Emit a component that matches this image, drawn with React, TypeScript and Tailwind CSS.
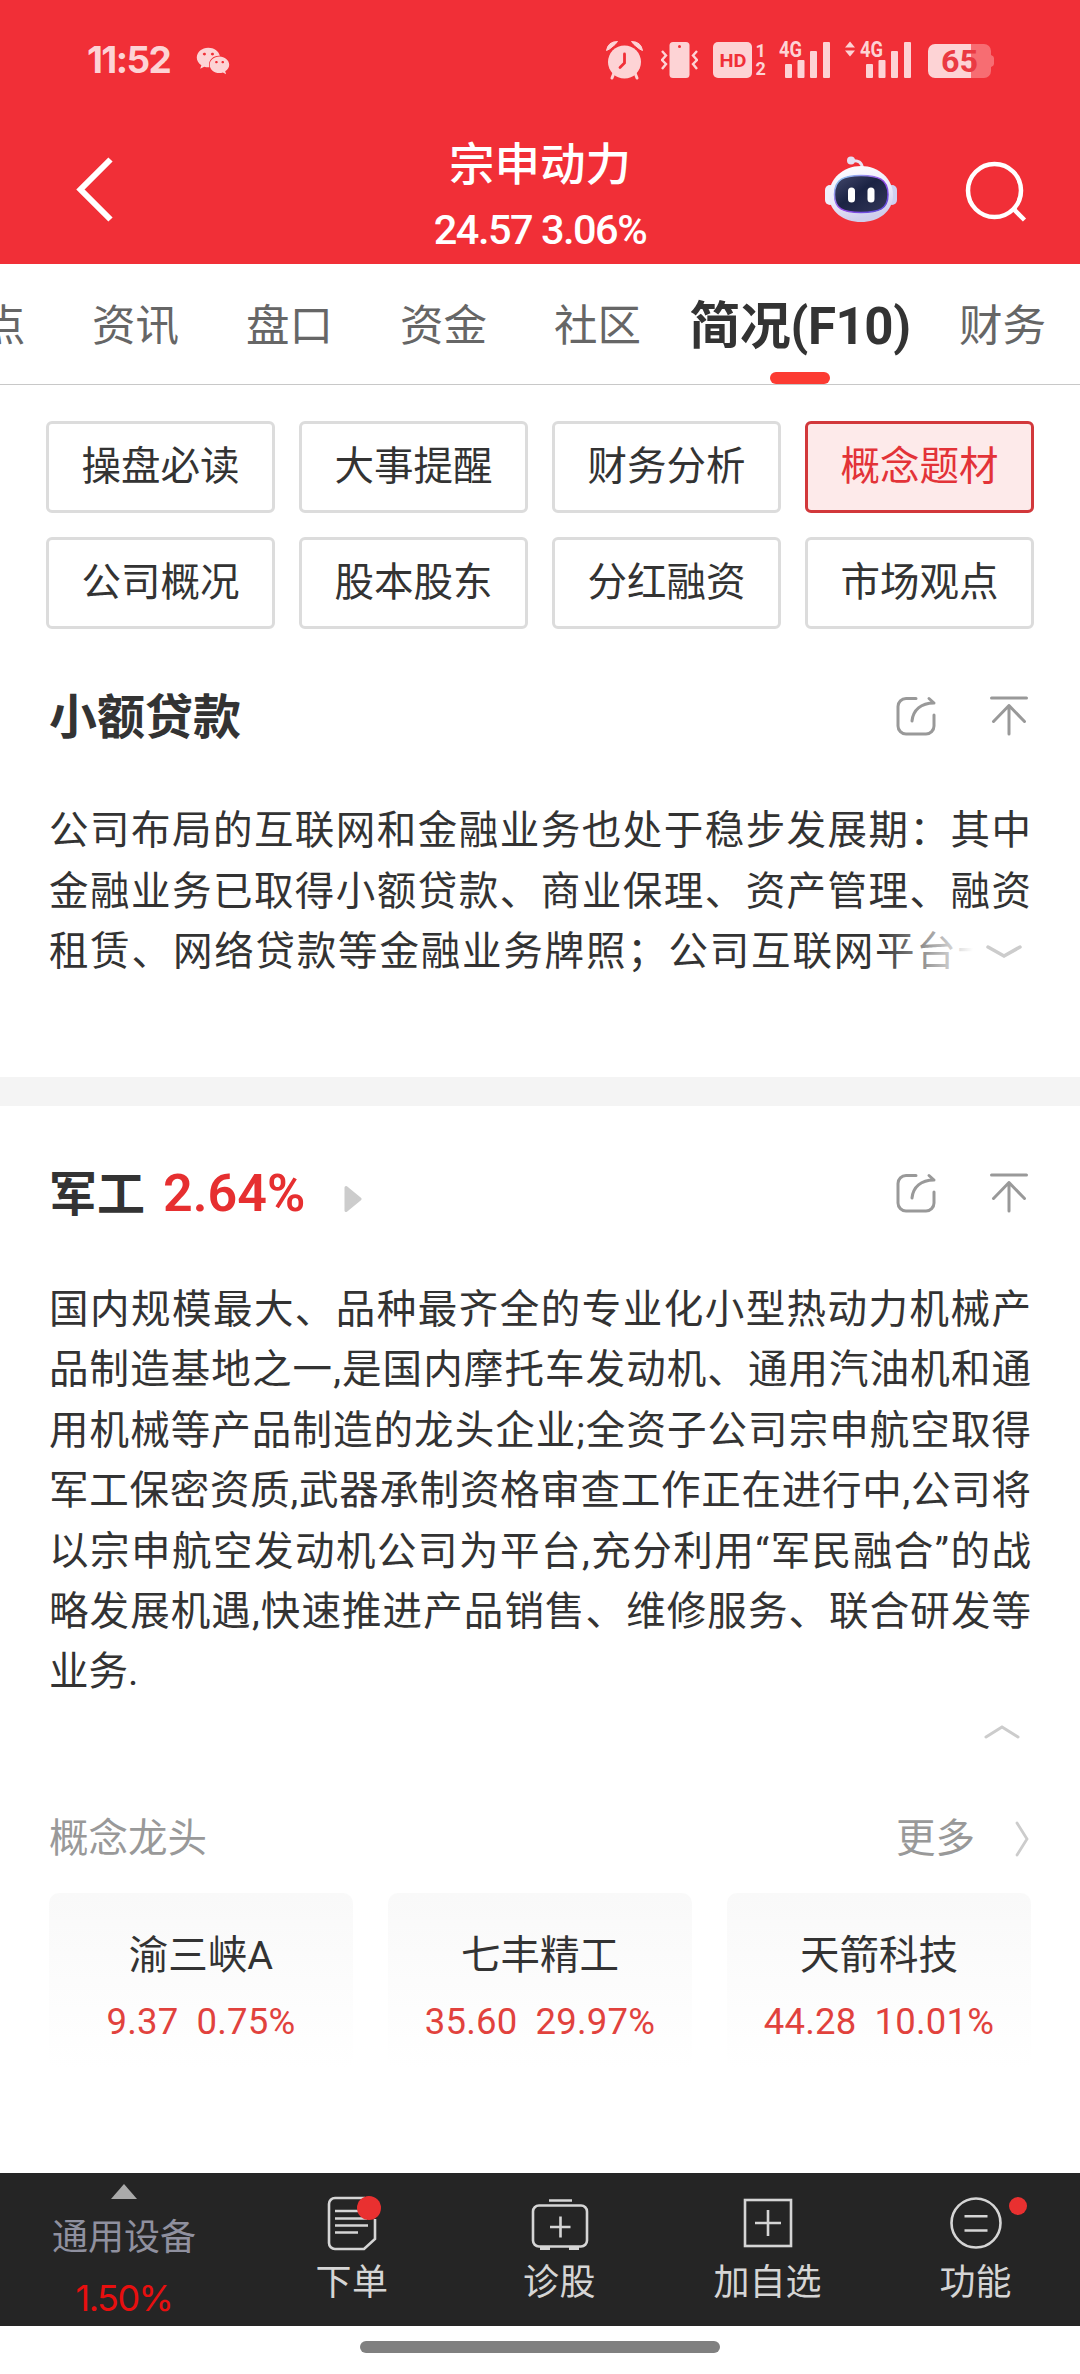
import React from 'react';
import { FaWeixin } from 'react-icons/fa';

const TABS = ['资讯', '盘口', '资金', '社区'];

const MENU = [
  '操盘必读', '大事提醒', '财务分析', '概念题材',
  '公司概况', '股本股东', '分红融资', '市场观点',
];

const LOAN_LINES = [
  '公司布局的互联网和金融业务也处于稳步发展期：其中',
  '金融业务已取得小额贷款、商业保理、资产管理、融资',
];

const MILITARY_LINES = [
  '国内规模最大、品种最齐全的专业化小型热动力机械产',
  '品制造基地之一,是国内摩托车发动机、通用汽油机和通',
  '用机械等产品制造的龙头企业;全资子公司宗申航空取得',
  '军工保密资质,武器承制资格审查工作正在进行中,公司将',
  '以宗申航空发动机公司为平台,充分利用“军民融合”的战',
  '略发展机遇,快速推进产品销售、维修服务、联合研发等',
];

const LEADERS = [
  { name: '渝三峡A', price: '9.37', change: '0.75%' },
  { name: '七丰精工', price: '35.60', change: '29.97%' },
  { name: '天箭科技', price: '44.28', change: '10.01%' },
];

const Signal: React.FC = () => (
  <svg className="-my-2.5" width="52" height="60" viewBox="0 -10 52 60" fill="#fdd3d5">
    <text x="0" y="17" fontSize="21.500" fontWeight="700" textLength="23" lengthAdjust="spacingAndGlyphs" fontFamily="Roboto, sans-serif">4G</text>
    <rect x="6" y="24" width="7" height="14" rx="1" />
    <rect x="18.500" y="20" width="7" height="18" rx="1" />
    <rect x="31" y="11" width="7" height="27" rx="1" />
    <rect x="44" y="2" width="7" height="36" rx="1" />
  </svg>
);

const StatusBar: React.FC = () => (
  <div className="flex h-[120px] items-center pl-[87px] text-[#fdd3d5]">
    <span className="w-[109px] font-['Inter','Noto_Sans_CJK_SC',sans-serif] text-[37px] font-bold tracking-[-1.6px]">11:52</span>
    <FaWeixin className="mt-0.5 h-[34px] w-[34px]" />
    <div className="ml-[376px] flex items-center">
      <svg width="37" height="40" viewBox="0 0 37 40" fill="none" stroke="#fdd3d5">
        <circle cx="18.500" cy="22" r="16.500" fill="#fdd3d5" stroke="none" />
        <path d="M8 33l-2 5M29 33l2 5" strokeWidth="3" strokeLinecap="round" />
        <path d="M0.500 10.500Q2 1.500 11.500 1.500L9 4.500L3.500 9Z" fill="#fdd3d5" strokeWidth="1" />
        <path d="M36.500 10.500Q35 1.500 25.500 1.500L28 4.500L33.500 9Z" fill="#fdd3d5" strokeWidth="1" />
        <path d="M18.500 14v9l-4.500 4.500" stroke="#f12f37" strokeWidth="2.800" strokeLinecap="round" />
      </svg>
      <svg className="ml-[18px]" width="37" height="40" viewBox="0 0 37 40" fill="none">
        <rect x="8.500" y="2" width="20" height="36" rx="3.500" fill="#fdd3d5" />
        <circle cx="18.500" cy="6.500" r="1.500" fill="#f12f37" />
        <path d="M1 11l4 4.500-4 4.500 4 4-4 5M36 11l-4 4.500 4 4.500-4 4 4 5" stroke="#fdd3d5" strokeWidth="2.400" />
      </svg>
      <svg className="ml-[15px]" width="54" height="40" viewBox="0 0 54 40" fontFamily="Roboto, sans-serif" fontWeight="700">
        <rect x="0" y="2" width="39" height="36" rx="5" fill="#fdd3d5" />
        <text x="6.500" y="26.500" fontSize="19" textLength="27" lengthAdjust="spacingAndGlyphs" fill="#f12f37">HD</text>
        <text x="42.500" y="17" fontSize="18" fill="#fdd3d5">1</text>
        <text x="42.500" y="34.500" fontSize="18" fill="#fdd3d5">2</text>
      </svg>
      <div className="ml-[12px]"><Signal /></div>
      <svg className="ml-[14px]" width="10" height="40" viewBox="0 0 10 40" fill="#fdd3d5">
        <path d="M5 1.500l5 6H0zM5 16.500l5-6H0z" />
      </svg>
      <div className="ml-[5px]"><Signal /></div>
      <svg className="ml-[16px]" width="66" height="40" viewBox="0 0 66 40">
        <path d="M43 4h13a7 7 0 0 1 7 7v4q3 1 3 3v6q0 2-3 3v4a7 7 0 0 1-7 7H43z" fill="#f76d72" />
        <path d="M43 4H7a7 7 0 0 0-7 7v20a7 7 0 0 0 7 7h36z" fill="#fdd3d5" />
        <text x="13" y="32" fontSize="31" fontWeight="700" textLength="37" lengthAdjust="spacingAndGlyphs" fontFamily="Roboto, sans-serif" fill="#ea3a42">65</text>
      </svg>
    </div>
  </div>
);

const Robot: React.FC = () => (
  <svg width="72" height="68" viewBox="0 0 72 68">
    <defs>
      <linearGradient id="shell" x1="0" y1="0" x2="0.300" y2="1">
        <stop offset="0" stopColor="#ffffff" />
        <stop offset="0.600" stopColor="#eceafa" />
        <stop offset="1" stopColor="#cfcdec" />
      </linearGradient>
      <linearGradient id="rim" x1="0" y1="0" x2="1" y2="1">
        <stop offset="0" stopColor="#8fe0f2" />
        <stop offset="0.500" stopColor="#9a4be8" />
        <stop offset="1" stopColor="#4f4bd8" />
      </linearGradient>
      <linearGradient id="visor" x1="0" y1="0" x2="1" y2="1">
        <stop offset="0" stopColor="#43486c" />
        <stop offset="0.450" stopColor="#1b2344" />
        <stop offset="1" stopColor="#333758" />
      </linearGradient>
    </defs>
    <path d="M26 5Q37 3 37.500 13" fill="none" stroke="#e9e4f4" strokeWidth="3" />
    <circle cx="26" cy="4.500" r="4" fill="#e4e0f3" />
    <rect x="0" y="29" width="10" height="20" rx="5" fill="#f0effb" />
    <rect x="62" y="29" width="10" height="20" rx="5" fill="#cfd0f0" />
    <path d="M36 10C54 10 68 23 68 39C68 56 53 66 36 66C19 66 4 56 4 39C4 23 18 10 36 10Z" fill="url(#shell)" />
    <path d="M36 19.500C53 19.500 63 23 63 38.500C63 53 54 56.500 36 56.500C18 56.500 9.500 53 9.500 38.500C9.500 23 19 19.500 36 19.500Z" fill="url(#visor)" stroke="url(#rim)" strokeWidth="1.500" />
    <rect x="23" y="31.500" width="7" height="15" rx="3.500" fill="#fff" />
    <rect x="42.500" y="31.500" width="7" height="15" rx="3.500" fill="#fff" />
  </svg>
);

const NavBar: React.FC = () => (
  <div className="flex h-[144px] text-white">
    <div className="flex w-[360px] pt-[37px] pl-[76px]">
      <svg width="38" height="66" viewBox="0 0 38 66" fill="none" stroke="#fff" strokeWidth="6">
        <path d="M34.500 2.500L4.500 32.500L34.500 62.500" />
      </svg>
    </div>
    <div className="flex w-[360px] flex-col items-center pt-[18px] whitespace-nowrap">
      <div className="text-[45.5px] leading-[56px] font-medium">宗申动力</div>
      <div className="mt-[8px] text-[41.5px] leading-[56px] font-medium tracking-[-1.5px]">24.57 3.06%</div>
    </div>
    <div className="flex w-[360px] pt-[36px] pl-[105px]">
      <Robot />
      <svg className="mt-[4px] ml-[68px]" width="62" height="64" viewBox="0 0 62 64" fill="none" stroke="#fff" strokeWidth="4.500">
        <circle cx="29.500" cy="30.500" r="26.500" />
        <path d="M48.500 49L59.500 60" />
      </svg>
    </div>
  </div>
);

const Tabs: React.FC = () => (
  <div className="flex h-[121px] border-b border-[#c8c8c8] text-[43.5px] whitespace-nowrap text-[#666]">
    <div className="-ml-[18px] flex w-[43px] shrink-0 items-center pt-[5px]">点</div>
    {TABS.map((tab) => (
      <div key={tab} className="ml-[67px] flex w-[87px] shrink-0 items-center pt-[5px]">{tab}</div>
    ))}
    <div className="relative ml-[48px] flex w-[222px] shrink-0 items-center justify-center pt-[6px] text-[51px] font-bold tracking-[-0.4px] text-[#333]">
      简况(F10)
      <span className="absolute bottom-0 left-[81px] h-3 w-[60px] rounded-full bg-[#fc3b32]" />
    </div>
    <div className="ml-[48px] flex shrink-0 items-center pt-[5px]">财务</div>
  </div>
);

const CardActions: React.FC = () => (
  <div className="ml-auto flex gap-[53px] pr-[1px]">
    <svg width="40" height="40" viewBox="0 0 40 40" fill="none" stroke="#999" strokeWidth="3" strokeLinecap="round" strokeLinejoin="round">
      <path d="M20 2.500H10A8 8 0 0 0 2 10.500V30A8 8 0 0 0 10 38H30A8 8 0 0 0 38 30V19" />
      <path d="M16 25C17 14 25 7 38 7L33 2.500" />
    </svg>
    <svg width="40" height="40" viewBox="0 0 40 40" fill="none" stroke="#999" strokeWidth="3" strokeLinecap="round" strokeLinejoin="round">
      <path d="M2.500 2H37.500M20 9.500V38M4.500 25.500L20 9.500L35.500 25.500" />
    </svg>
  </div>
);

const BottomBar: React.FC = () => (
  <div className="flex h-[153px] bg-[#252525] text-[36px] leading-[40px] text-[#d5d5d5]">
    <div className="flex w-[248px] flex-col items-center pt-[11px]">
      <svg width="26" height="15" viewBox="0 0 26 15" fill="#aaa"><path d="M13 0l13 15H0z" /></svg>
      <div className="mt-[19px] text-[#8f909f]">通用设备</div>
      <div className="mt-[20px] font-['Inter',sans-serif] tracking-[-1.5px] text-[#e80f0f]">1.50%</div>
    </div>
    <div className="flex w-[208px] flex-col items-center pt-[22px]">
      <div className="relative">
        <svg width="50" height="56" viewBox="0 0 50 56" fill="none" stroke="#d5d5d5" strokeWidth="2.600">
          <path d="M48 24V44L37 54H8A6 6 0 0 1 2 48V9A6 6 0 0 1 8 3H38" />
          <path d="M8 16H32M8 23.500H40M8 30.500H41M8 37.500H31" />
        </svg>
        <span className="absolute top-px left-[30px] h-6 w-6 rounded-full bg-[#e93030]" />
      </div>
      <div className="mt-[12px] tracking-[0.5px]">下单</div>
    </div>
    <div className="flex w-[207px] flex-col items-center pt-[22px]">
      <svg width="58" height="56" viewBox="0 0 58 56" fill="none" stroke="#d5d5d5" strokeWidth="2.600">
        <rect x="2" y="10.500" width="54" height="41" rx="6" />
        <path d="M18 5.500H41M29.500 21.500V42.500M19 32H39.500" />
        <path d="M9 53H19M38 53H48" strokeWidth="4" />
      </svg>
      <div className="mt-[12px] tracking-[0.5px]">诊股</div>
    </div>
    <div className="flex w-[208px] flex-col items-center pt-[22px] pl-px">
      <svg width="50" height="56" viewBox="0 0 50 56" fill="none" stroke="#d5d5d5" strokeWidth="2.600">
        <rect x="2" y="5" width="46" height="46" />
        <path d="M25 15V41M12 28H38" />
      </svg>
      <div className="mt-[12px]">加自选</div>
    </div>
    <div className="flex w-[208px] flex-col items-center pt-[22px] pl-px">
      <div className="relative">
        <svg width="54" height="56" viewBox="0 0 54 56" fill="none" stroke="#d5d5d5" strokeWidth="2.600">
          <circle cx="27" cy="28" r="24.500" />
          <path d="M15.500 21.300H38.500M15.500 35.500H38.500" />
        </svg>
        <span className="absolute top-[2px] left-[60px] h-[18px] w-[18px] rounded-full bg-[#e93030]" />
      </div>
      <div className="mt-[12px]">功能</div>
    </div>
  </div>
);

export default function App() {
  return (
    <div className="flex h-[2374px] w-[1080px] flex-col overflow-hidden bg-white font-['Roboto','Noto_Sans_CJK_SC',sans-serif] text-[#333]">
      <header className="h-[264px] bg-[#f12f37]">
        <StatusBar />
        <NavBar />
      </header>
      <Tabs />

      <div className="mx-[46px] mt-[36px] grid grid-cols-4 gap-6 text-[39.5px]">
        {MENU.map((item) => (
          <div
            key={item}
            className={`flex h-[92px] items-center justify-center rounded-[6px] border-[3px] ${
              item === '概念题材'
                ? 'border-[#d2383b] bg-[#fdeaea] text-[#e33338]'
                : 'border-[#dcdcdc]'
            }`}
          >
            {item}
          </div>
        ))}
      </div>

      {/* Micro-loan concept, collapsed */}
      <section className="h-[448px] pr-[50px] pl-[49px] pt-[57px]">
        <div className="flex h-[60px] items-center">
          <h2 className="pt-[4px] text-[48px] font-bold">小额贷款</h2>
          <CardActions />
        </div>
        <div className="mt-[55px] text-[39.5px] leading-[60.5px] whitespace-nowrap">
          {LOAN_LINES.map((line) => (
            <p key={line} className="w-[982px] [text-align-last:justify]">{line}</p>
          ))}
          <div className="relative">
            <p className="tracking-[1.8px]">租赁、网络贷款等金融业务牌照；公司互联网平台一</p>
            <div className="absolute top-0 right-0 flex h-[60px] w-[150px] items-center justify-end bg-[linear-gradient(to_right,rgba(255,255,255,0),#fff_62%)] pr-[8px]">
              <svg width="36" height="14" viewBox="0 0 36 14" fill="none" stroke="#ccc" strokeWidth="3.500" strokeLinecap="round">
                <path d="M2 2L18 11L34 2" />
              </svg>
            </div>
          </div>
        </div>
      </section>

      <div className="h-[29px] bg-[#f4f4f4]" />

      {/* Military concept, expanded */}
      <section className="pr-[50px] pl-[49px] pt-[57px]">
        <div className="flex h-[60px] items-center">
          <h2 className="pt-[4px] text-[48px] font-bold">军工</h2>
          <span className="ml-[18px] pt-[2px] text-[52px] font-semibold text-[#e62f30]">2.64%</span>
          <svg className="mt-3 ml-[39px]" width="18" height="28" viewBox="0 0 18 28" fill="#ccc" stroke="#ccc" strokeWidth="3" strokeLinejoin="round">
            <path d="M2 2.500L16 14L2 25.500z" />
          </svg>
          <CardActions />
        </div>
        <div className="mt-[57px] w-[982px] text-[39.5px] leading-[60.4px] whitespace-nowrap">
          {MILITARY_LINES.map((line) => (
            <p key={line} className="[text-align-last:justify]">{line}</p>
          ))}
          <p>业务.</p>
        </div>
        <div className="mt-[21px] flex justify-end pr-[10px]">
          <svg width="36" height="16" viewBox="0 0 36 16" fill="none" stroke="#ccc" strokeWidth="3" strokeLinecap="round">
            <path d="M2 13L18 3L34 13" />
          </svg>
        </div>

        <div className="mt-[69px] flex h-[60px] items-center text-[39.5px] text-[#999]">
          <span>概念龙头</span>
          <span className="ml-auto">更多</span>
          <svg className="ml-[39px]" width="16" height="36" viewBox="0 0 16 36" fill="none" stroke="#ccc" strokeWidth="2.800" strokeLinecap="round">
            <path d="M3 2L13 18L3 34" />
          </svg>
        </div>

        <div className="mt-[24px] -mr-px grid grid-cols-3 gap-[35px]">
          {LEADERS.map((stock) => (
            <div key={stock.name} className="flex h-[176px] flex-col items-center rounded-[10px] bg-linear-to-b from-[#f9f9f9] to-white pt-[33px]">
              <div className="text-[39.5px] leading-[60px]">{stock.name}</div>
              <div className="mt-[16px] flex gap-[18px] text-[36.5px] leading-[40px] tracking-[0.2px] text-[#e1423d]">
                <span>{stock.price}</span>
                <span>{stock.change}</span>
              </div>
            </div>
          ))}
        </div>
      </section>

      <div className="mt-auto">
        <BottomBar />
        <div className="flex h-[48px] justify-center pt-[15px]">
          <div className="h-3 w-[360px] rounded-full bg-[#808080]" />
        </div>
      </div>
    </div>
  );
}
